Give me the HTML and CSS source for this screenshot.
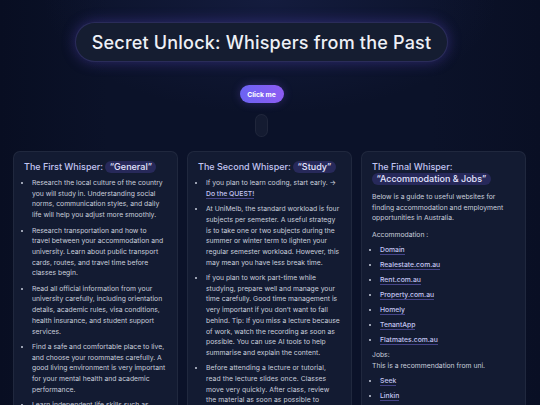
FILE: index.html
```html
<!DOCTYPE html>
<html lang="en">
<head>
<meta charset="utf-8">
<title>Secret Unlock</title>
<link rel="stylesheet" href="styles.css">
</head>
<body>
<header class="hero">
  <h1 class="title">Secret Unlock: Whispers from the Past</h1>
  <button class="btn">Click me</button>
  <div class="scroll"></div>
</header>
<main class="cards">
  <section class="card">
    <h2 class="card-title">The First Whisper: <span class="tag">“General”</span></h2>
    <ul class="list">
      <li>Research the local culture of the country you will study in. Understanding social norms, communication styles, and daily life will help you adjust more smoothly.</li>
      <li>Research transportation and how to travel between your accommodation and university. Learn about public transport cards, routes, and travel time before classes begin.</li>
      <li>Read all official information from your university carefully, including orientation details, academic rules, visa conditions, health insurance, and student support services.</li>
      <li>Find a safe and comfortable place to live, and choose your roommates carefully. A good living environment is very important for your mental health and academic performance.</li>
      <li>Learn independent life skills such as cooking, budgeting, and managing your own schedule before you leave home.</li>
    </ul>
  </section>
  <section class="card">
    <h2 class="card-title">The Second Whisper: <span class="tag">“Study”</span></h2>
    <ul class="list">
      <li>If you plan to learn coding, start early. → <a class="link" href="#">Do the QUEST!</a></li>
      <li>At UniMelb, the standard workload is four subjects per semester. A useful strategy is to take one or two subjects during the summer or winter term to lighten your regular semester workload. However, this may mean you have less break time.</li>
      <li>If you plan to work part-time while studying, prepare well and manage your time carefully. Good time management is very important if you don’t want to fall behind. Tip: If you miss a lecture because of work, watch the recording as soon as possible. You can use AI tools to help summarise and explain the content.</li>
      <li class="narrow">Before attending a lecture or tutorial, read the lecture slides once. Classes move very quickly. After class, review the material as soon as possible to reinforce your understanding.</li>
    </ul>
  </section>
  <section class="card">
    <h2 class="card-title">The Final Whisper:<br><span class="tag">“Accommodation &amp; Jobs”</span></h2>
    <p class="intro">Below is a guide to useful websites for finding accommodation and employment opportunities in Australia.</p>
    <p class="label">Accommodation :</p>
    <ul class="links">
      <li><a class="link" href="#">Domain</a></li>
      <li><a class="link" href="#">Realestate.com.au</a></li>
      <li><a class="link" href="#">Rent.com.au</a></li>
      <li><a class="link" href="#">Property.com.au</a></li>
      <li><a class="link" href="#">Homely</a></li>
      <li><a class="link" href="#">TenantApp</a></li>
      <li><a class="link" href="#">Flatmates.com.au</a></li>
    </ul>
    <p class="label jobs">Jobs:<br>This is a recommendation from uni.</p>
    <ul class="links">
      <li><a class="link" href="#">Seek</a></li>
      <li><a class="link" href="#">Linkin</a></li>
    </ul>
  </section>
</main>
</body>
</html>
```
FILE: styles.css
```css
* { box-sizing: border-box; }
html, body { margin: 0; padding: 0; }
body {
  width: 540px;
  height: 405px;
  overflow: hidden;
  font-family: Inter, "Liberation Sans", sans-serif;
  color: #c9cedc;
  background:
    radial-gradient(ellipse 60% 40% at 50% 0%, rgba(40, 50, 110, 0.3), transparent 70%),
    linear-gradient(90deg, #080e22 0%, #0b1229 20%, #0b1229 80%, #090f24 100%);
}
.hero {
  display: flex;
  flex-direction: column;
  align-items: center;
  padding: 22px 17px 0 0;
}
.title {
  margin: 0;
  height: 40px;
  padding: 0 16px;
  display: flex;
  align-items: center;
  border-radius: 20px;
  background: #151d31;
  border: 1px solid rgba(120, 100, 230, 0.22);
  box-shadow: 0 0 14px rgba(110, 80, 230, 0.35);
  color: #eef0f6;
  font-size: 18px;
  font-weight: 500;
  letter-spacing: 0.2px;
}
.btn {
  margin-top: 23px;
  height: 18px;
  width: 44px;
  padding: 0;
  border: 0;
  border-radius: 9px;
  background: linear-gradient(90deg, #6b63f3, #8d5cf2);
  box-shadow: 0 0 10px rgba(120, 90, 240, 0.3);
  color: #fff;
  font-family: Inter, "Liberation Sans", sans-serif;
  font-size: 6.8px;
  font-weight: 700;
}
.scroll {
  margin-top: 11px;
  width: 13px;
  height: 23px;
  border-radius: 7px;
  background: rgba(255, 255, 255, 0.04);
  border: 1px solid rgba(255, 255, 255, 0.05);
}
.cards {
  display: grid;
  grid-template-columns: repeat(3, 165px);
  gap: 9px;
  padding: 14px 13px 0;
  align-items: start;
}
.card {
  background: #131b32;
  border: 1px solid rgba(255, 255, 255, 0.06);
  border-radius: 7px;
  padding: 9px 11px 20px 10px;
  min-height: 300px;
}
.card-title {
  margin: 0 0 5px;
  font-size: 9px;
  line-height: 12px;
  font-weight: 500;
  color: #c3c6f3;
  white-space: nowrap;
}
.tag {
  display: inline-block;
  padding: 0 4.5px;
  border-radius: 7px;
  background: #27295a;
  color: #e4e5ff;
  line-height: 12px;
}
.list, .links, .intro, .label {
  font-size: 6.8px;
  line-height: 10.7px;
}
.list, .links {
  margin: 0;
  padding: 0 0 0 8px;
}
.list li { margin-bottom: 4.7px; }
.list li.narrow { letter-spacing: 0.06px; }
.list li::marker, .links li::marker { color: #c9cedc; font-size: 7px; }
.link {
  color: #c5c7f4;
  font-weight: 500;
  text-decoration: none;
  border-bottom: 1px solid rgba(120, 110, 220, 0.5);
}
.intro { margin: 7px 0 6px; }
.label { margin: 0 0 4.3px; }
.links li { margin-bottom: 4.3px; }
```
